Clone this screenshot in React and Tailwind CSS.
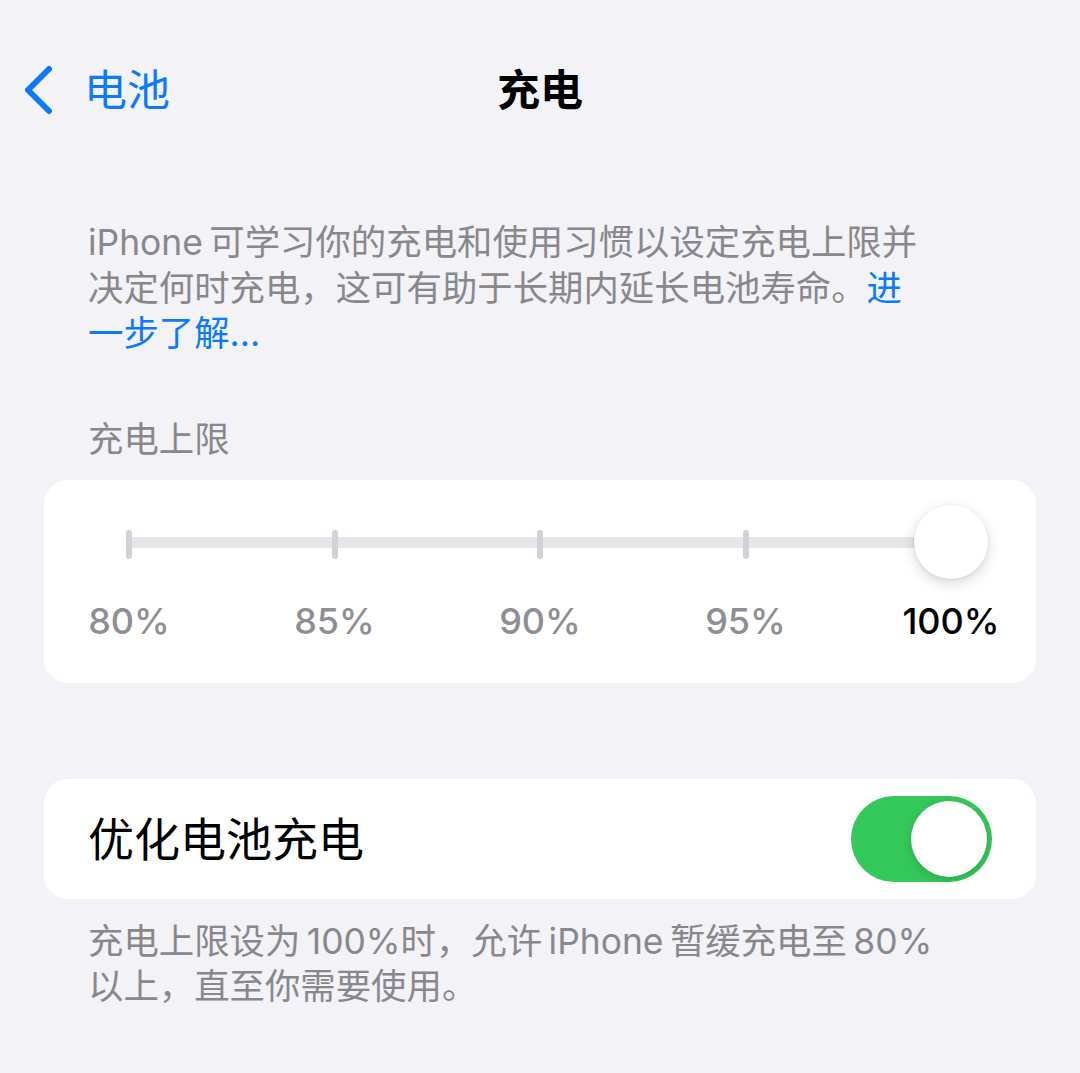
const font = { fontFamily: 'Inter, "Noto Sans CJK SC", sans-serif' }

const STOPS = ['80%', '85%', '90%', '95%', '100%']

function BackChevron() {
  return (
    <svg width="34" height="50" viewBox="0 0 34 50" className="shrink-0">
      <path
        d="M27 4 L6 25 L27 46"
        fill="none"
        stroke="#0a7aff"
        strokeWidth="6"
        strokeLinecap="round"
        strokeLinejoin="round"
      />
    </svg>
  )
}

function LimitSlider() {
  return (
    <div className="bg-white rounded-[24px] pt-[25px] pb-[40px]">
      {/* track with tick marks, knob sits on the last stop */}
      <div className="relative mx-[85px] h-[74px]">
        <div className="absolute inset-x-0 top-[32px] h-[11px] rounded-full bg-[#e5e5ea]" />
        <div className="relative flex h-full items-center justify-between">
          {STOPS.map((s, i) => (
            <div key={s} className="relative flex w-0 justify-center">
              {i < STOPS.length - 1 ? (
                <div className="mt-[5px] h-[29px] w-[6px] shrink-0 rounded-full bg-[#d1d1d6]" />
              ) : (
                <div className="h-[74px] w-[74px] shrink-0 rounded-full bg-white shadow-[0_4px_14px_rgba(0,0,0,0.16),0_1px_3px_rgba(0,0,0,0.08)]" />
              )}
            </div>
          ))}
        </div>
      </div>
      <div className="mx-[85px] mt-[20px] flex justify-between">
        {STOPS.map((s, i) => (
          <div key={s} className="flex w-0 justify-center">
            <span
              className={`shrink-0 whitespace-nowrap text-[36px] font-medium leading-[44px] ${
                i === STOPS.length - 1 ? 'text-black' : 'text-[#8e8e93]'
              }`}
            >
              {s}
            </span>
          </div>
        ))}
      </div>
    </div>
  )
}

function Toggle() {
  return (
    <div className="flex h-[86px] w-[141px] items-center justify-end rounded-full bg-[#34c759] p-[5px]">
      <div className="h-[76px] w-[76px] rounded-full bg-white shadow-[0_3px_8px_rgba(0,0,0,0.15)]" />
    </div>
  )
}

export default function App() {
  return (
    <div className="min-h-[1073px] w-[1080px] bg-[#f2f2f7] px-[44px] pt-[40px] pb-[60px]" style={font}>
      {/* navigation bar */}
      <div className="grid h-[100px] grid-cols-[1fr_auto_1fr] items-center">
        <div className="-ml-[22px] flex items-center gap-[28px]">
          <BackChevron />
          <span className="text-[43px] leading-none text-[#0a7aff]">电池</span>
        </div>
        <h1 className="text-[43px] font-semibold leading-none text-black">充电</h1>
        <div />
      </div>

      <p className="mt-[80px] px-[44px] text-[35.4px] leading-[45.5px] text-[#88888c]">
        iPhone{'\u2009'}可学习你的充电和使用习惯以设定充电上限并
        <br />
        决定何时充电，这可有助于长期内延长电池寿命。<span className="text-[#0a7aff]">进</span>
        <br />
        <span className="text-[#0a7aff]">一步了解...</span>
      </p>

      <div className="mt-[60px] px-[44px] text-[35.4px] leading-[45px] text-[#88888c]">充电上限</div>

      <div className="mt-[18px]">
        <LimitSlider />
      </div>

      <div className="mt-[96px] flex h-[120px] items-center justify-between rounded-[24px] bg-white pl-[44px] pr-[44px]">
        <span className="text-[46px] leading-none text-black">优化电池充电</span>
        <Toggle />
      </div>

      <p className="mt-[20px] px-[44px] text-[35.4px] leading-[45px] text-[#88888c]">
        充电上限设为{'\u2009'}100%时，允许{'\u2009'}iPhone{'\u2009'}暂缓充电至{'\u2009'}80%
        <br />
        以上，直至你需要使用。
      </p>
    </div>
  )
}
